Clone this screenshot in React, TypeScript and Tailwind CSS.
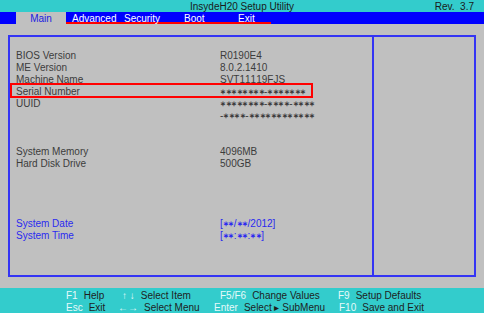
const rows: { label?: string; value?: string; blue?: boolean; mark?: boolean }[] = [
  { label: "BIOS Version", value: "R0190E4" },
  { label: "ME Version", value: "8.0.2.1410" },
  { label: "Machine Name", value: "SVT11119FJS" },
  { label: "Serial Number", value: "********-*******", mark: true },
  { label: "UUID", value: "********-****-****" },
  { value: "-****-************" },
  {},
  {},
  { label: "System Memory", value: "4096MB" },
  { label: "Hard Disk Drive", value: "500GB" },
  {},
  {},
  {},
  {},
  { label: "System Date", value: "[**/**/2012]", blue: true },
  { label: "System Time", value: "[**:**:**]", blue: true },
]

// masked digits: centred asterisk glyph, narrowed to the BIOS cell width
const Value = ({ text }: { text: string }) => (
  <span className="flex items-center">
    {text.split("").map((c, i) =>
      c === "*" ? (
        <span key={i} className="inline-block w-[5.5px] text-center text-[6.5px] font-bold">
          ∗
        </span>
      ) : (
        <span key={i}>{c}</span>
      )
    )}
  </span>
)

const Key = ({ k, d, w }: { k: string; d: string; w: string }) => (
  <span className={`flex gap-[6px] ${w}`}>
    <span className="text-[#e6fafa]">{k}</span>
    <span className="text-[#1e1e1e]">{d}</span>
  </span>
)

export default function App() {
  return (
    <div
      className="flex h-[313px] w-[484px] flex-col overflow-hidden bg-[#c0c0c0] text-[10px] leading-[12px]"
      style={{ fontFamily: '"Liberation Sans", Arial, sans-serif' }}
    >
      <div className="relative flex h-[12px] items-center justify-center bg-[#33cccc] pt-[1px] text-[#1a1a1a]">
        <span>InsydeH20 Setup Utility</span>
        <span className="absolute right-[10px] top-[1px]">Rev.&nbsp;&nbsp;3.7</span>
      </div>

      <div className="flex h-[12px] bg-[#0000ff] pl-[16px] text-white">
        <span className="w-[50px] bg-[#c0c0c0] pt-[1px] text-center text-[#2020e0]">Main</span>
        <div className="flex border-b-2 border-[#ff0000] pt-[1px]">
          <span className="w-[58px] pl-[6px]">Advanced</span>
          <span className="w-[60px]">Security</span>
          <span className="w-[54px]">Boot</span>
          <span className="w-[33px]">Exit</span>
        </div>
      </div>

      <div className="mx-[8px] mt-[11px] flex h-[242px] border-2 border-[#3434f4]">
        <div className="w-[362px] pl-[6px] pt-[12px]">
          {rows.map((r, i) => (
            <div
              key={i}
              className={`relative flex h-[12px] ${r.blue ? "text-[#2a2af0]" : "text-[#3c3c3c]"}`}
            >
              {r.mark && (
                <span className="absolute -left-[6px] -top-[2px] h-[15px] w-[303px] border-2 border-[#ff0000]" />
              )}
              <span className="w-[204px] pt-[1px]">{r.label}</span>
              <span className="pt-[1px]">{r.value && <Value text={r.value} />}</span>
            </div>
          ))}
        </div>
        <div className="w-[2px] bg-[#3434f4]" />
        <div className="flex-1" />
      </div>

      <div className="mt-[11px] flex h-[25px] flex-col bg-[#33cccc] pt-[2px]">
        <div className="flex h-[12px] pl-[66px]">
          <Key k="F1" d="Help" w="w-[56px]" />
          <Key k="↑ ↓" d="Select Item" w="w-[98px]" />
          <Key k="F5/F6" d="Change Values" w="w-[118px]" />
          <Key k="F9" d="Setup Defaults" w="" />
        </div>
        <div className="flex h-[12px] pl-[66px]">
          <Key k="Esc" d="Exit" w="w-[52px]" />
          <Key k="←→" d="Select Menu" w="w-[96px]" />
          <Key k="Enter" d="Select ▸ SubMenu" w="w-[125px]" />
          <Key k="F10" d="Save and Exit" w="" />
        </div>
      </div>
    </div>
  )
}
